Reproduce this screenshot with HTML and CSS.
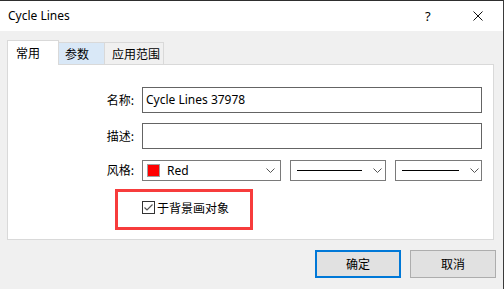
FILE: index.html
```html
<!DOCTYPE html>
<html>
<head>
<meta charset="utf-8">
<link rel="stylesheet" href="styles.css">
</head>
<body>
<div class="window">
  <div class="titlebar">
    <span class="title">Cycle Lines</span>
    <span class="help">?</span>
    <span class="close"><svg width="10" height="10" viewBox="0 0 10 10"><path d="M0.5 0.5L9.5 9.5M9.5 0.5L0.5 9.5" stroke="#111" stroke-width="1" fill="none"/></svg></span>
  </div>
  <div class="body">
    <div class="tabs">
      <div class="tab active">常用</div>
      <div class="tab hover">参数</div>
      <div class="tab last">应用范围</div>
    </div>
    <div class="panel">
      <div class="form">
        <label class="lbl">名称:</label>
        <div class="edit">Cycle Lines 37978</div>
        <label class="lbl">描述:</label>
        <div class="edit"></div>
        <label class="lbl lbl-style">风格:</label>
        <div class="combos">
          <div class="combo c-color">
            <span class="swatch"></span><span class="ctext">Red</span>
            <svg class="chev" width="9" height="5" viewBox="0 0 9 5"><path d="M0.5 0.5L4.5 4.5L8.5 0.5" stroke="#555" fill="none"/></svg>
          </div>
          <div class="combo c-line1">
            <span class="line"></span>
            <svg class="chev" width="9" height="5" viewBox="0 0 9 5"><path d="M0.5 0.5L4.5 4.5L8.5 0.5" stroke="#555" fill="none"/></svg>
          </div>
          <div class="combo c-line2">
            <span class="line"></span>
            <svg class="chev" width="9" height="5" viewBox="0 0 9 5"><path d="M0.5 0.5L4.5 4.5L8.5 0.5" stroke="#555" fill="none"/></svg>
          </div>
        </div>
      </div>
      <div class="highlight">
        <span class="check"><svg width="13" height="13" viewBox="0 0 13 13"><rect x="0.5" y="0.5" width="12" height="12" fill="#fff" stroke="#333"/><path d="M2.5 6.5L5 9L10.5 3.5" stroke="#555" stroke-width="1.2" fill="none"/></svg></span>
        <span class="cbtext">于背景画对象</span>
      </div>
    </div>
    <div class="buttons">
      <div class="btn default">确定</div>
      <div class="btn">取消</div>
    </div>
  </div>
</div>
</body>
</html>
```
FILE: styles.css
```css
html, body {
  margin: 0;
  padding: 0;
}
body {
  font-family: "Segoe UI", "Noto Sans", "Noto Sans CJK SC", sans-serif;
  font-size: 12px;
  color: #000;
  background: #f0f0f0;
}
.window {
  width: 504px;
  height: 289px;
  box-sizing: border-box;
  border-top: 1px solid #2e2e2e;
  border-right: 1px solid #3a3a3a;
  background: #f0f0f0;
  overflow: hidden;
}
.titlebar {
  height: 30px;
  background: #fff;
  display: flex;
  align-items: center;
}
.title {
  padding-left: 8px;
  flex: 1;
  font-size: 12px;
  line-height: 16px;
}
.help {
  width: 10px;
  margin-right: 38px;
  font-size: 13px;
  line-height: 16px;
}
.close {
  display: flex;
  width: 10px;
  height: 10px;
  margin-right: 20px;
}
.body {
  padding: 9px 0 0 7px;
}
.tabs {
  display: flex;
  align-items: flex-end;
  height: 24px;
  position: relative;
  z-index: 1;
}
.tab {
  box-sizing: border-box;
  height: 22px;
  padding: 0 0 0 8px;
  border: 1px solid #d9d9d9;
  border-bottom: none;
  border-left: none;
  background: #f0f0f0;
  line-height: 21px;
  white-space: nowrap;
  font-family: "Noto Sans CJK SC", sans-serif;
}
.tab.active {
  width: 52px;
  height: 25px;
  border-left: 1px solid #d9d9d9;
  background: #fff;
  margin-bottom: -1px;
  line-height: 24px;
}
.tab.hover {
  width: 46px;
  background: #d9e8f7;
  padding-left: 6px;
}
.tab.last {
  width: 59px;
  padding-left: 7px;
}
.panel {
  box-sizing: border-box;
  width: 487px;
  height: 176px;
  border: 1px solid #d9d9d9;
  background: #fff;
  padding-top: 22px;
}
.form {
  display: grid;
  grid-template-columns: 126px 340px;
  column-gap: 8px;
  row-gap: 10px;
  align-items: center;
}
.lbl {
  text-align: right;
  font-family: "Noto Sans CJK SC", sans-serif;
  line-height: 16px;
}
.edit {
  box-sizing: border-box;
  height: 26px;
  border: 1px solid #646464;
  padding: 0 3px;
  line-height: 24px;
}
.combos {
  display: flex;
  gap: 9px;
  margin-top: 1px;
}
.combo {
  box-sizing: border-box;
  height: 21px;
  border: 1px solid #7a7a7a;
  display: flex;
  align-items: center;
  position: relative;
}
.c-color { width: 140px; }
.c-line1 { width: 96px; }
.c-line2 { width: 88px; }
.swatch {
  width: 13px;
  height: 13px;
  box-sizing: border-box;
  background: #ff0000;
  border: 1px solid #a0a0a0;
  margin-left: 4px;
}
.ctext {
  margin-left: 7px;
  flex: 1;
  line-height: 16px;
}
.line {
  height: 1px;
  background: #000;
  margin-left: 6px;
}
.c-line1 .line { width: 65px; margin-right: 11px; }
.c-line2 .line { width: 57px; margin-right: 11px; }
.chev {
  display: block;
}
.c-color .chev { margin-right: 5px; }
.highlight {
  box-sizing: border-box;
  width: 138px;
  height: 41px;
  margin: 8px 0 0 107px;
  border: 3px solid #f73c3c;
  display: flex;
  align-items: center;
  padding: 0 0 4px 24px;
}
.check {
  display: flex;
  width: 13px;
  height: 13px;
}
.cbtext {
  margin-left: 2px;
  font-family: "Noto Sans CJK SC", sans-serif;
  line-height: 16px;
}
.buttons {
  display: flex;
  justify-content: flex-end;
  gap: 9px;
  padding: 10px 7px 0 0;
}
.btn {
  box-sizing: border-box;
  width: 86px;
  height: 28px;
  border: 1px solid #adadad;
  background: #e1e1e1;
  text-align: center;
  line-height: 26px;
  font-family: "Noto Sans CJK SC", sans-serif;
}
.btn.default {
  border: 2px solid #0078d7;
  line-height: 24px;
}
```
